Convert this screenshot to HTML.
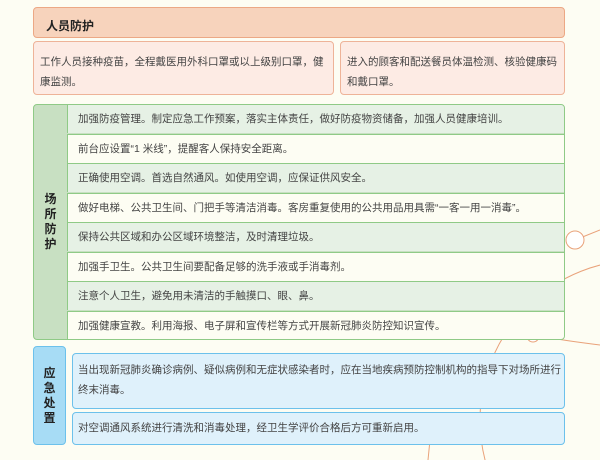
<!DOCTYPE html>
<html><head><meta charset="utf-8"><style>
*{margin:0;padding:0;box-sizing:border-box}
body{width:600px;height:460px;background:#fdfdf3;font-family:"Liberation Sans","Noto Sans CJK SC",sans-serif;font-size:10.5px;color:#444;position:relative;overflow:hidden}
.a{position:absolute}
.hd{left:33px;top:7px;width:532px;height:31px;background:#f7d3bc;border:1px solid #eca885;border-radius:4px;font-weight:bold;font-size:12px;color:#222;padding:9px 0 0 12px}
.pb{top:41px;height:54px;background:#fdebe4;border:1px solid #eeb398;border-radius:4px;padding:10px 5px 0 6px;line-height:20px}
.gr{left:33px;top:104px;width:532px;height:236px;border:1px solid #8fca86;border-radius:4px;background:#c8e0c2;overflow:hidden}
.gl{position:absolute;left:0;top:0;width:33px;height:100%;font-weight:bold;font-size:12px;color:#222;display:flex;align-items:center;justify-content:center;line-height:15px;text-align:center}
.row{position:absolute;left:33px;right:0;height:29.4px;border-left:1px solid #8fca86;border-top:1px solid #8fca86;padding:0 0 0 10px;line-height:28px}
.o{background:#e6f1e5}.e{background:#fdfdf3}
.bl{left:33px;top:346px;width:33px;height:99px;background:#a7dcf5;border:1px solid #6cc1eb;border-radius:4px;font-weight:bold;font-size:12px;color:#222;display:flex;align-items:center;justify-content:center;text-align:center;line-height:15px}
.bb{left:72px;width:493px;background:#dff1fb;border:1px solid #6cc1eb;border-radius:4px;padding:0 3px 0 5px;overflow:hidden}
</style></head><body>
<svg class="a" style="left:0;top:0" width="600" height="460">
<g fill="none" stroke="#e9a27a" stroke-width="1">
<circle cx="640" cy="420" r="160"/>
<path d="M575 240 L600 230 M560 270 Q540 300 533 336 M540 336 Q560 340 600 345 M428 460 L430 440"/>
</g>
<circle cx="575" cy="240" r="9" fill="#fff" stroke="#e9a27a"/>
<circle cx="533" cy="336" r="6" fill="#fff" stroke="#e9a27a"/>
</svg>
<div class="a hd">人员防护</div>
<div class="a pb" style="left:33px;width:301px">工作人员接种疫苗，全程戴医用外科口罩或以上级别口罩，健康监测。</div>
<div class="a pb" style="left:340px;width:225px">进入的顾客和配送餐员体温检测、核验健康码和戴口罩。</div>
<div class="a gr">
<div class="gl">场<br>所<br>防<br>护</div>
<div class="row o" style="top:-1px">加强防疫管理。制定应急工作预案，落实主体责任，做好防疫物资储备，加强人员健康培训。</div>
<div class="row e" style="top:28.5px">前台应设置“1 米线”，提醒客人保持安全距离。</div>
<div class="row o" style="top:58px">正确使用空调。首选自然通风。如使用空调，应保证供风安全。</div>
<div class="row e" style="top:87.5px">做好电梯、公共卫生间、门把手等清洁消毒。客房重复使用的公共用品用具需“一客一用一消毒”。</div>
<div class="row o" style="top:117px">保持公共区域和办公区域环境整洁，及时清理垃圾。</div>
<div class="row e" style="top:146.5px">加强手卫生。公共卫生间要配备足够的洗手液或手消毒剂。</div>
<div class="row o" style="top:176px">注意个人卫生，避免用未清洁的手触摸口、眼、鼻。</div>
<div class="row e" style="top:205.5px">加强健康宣教。利用海报、电子屏和宣传栏等方式开展新冠肺炎防控知识宣传。</div>
</div>
<div class="a bl">应<br>急<br>处<br>置</div>
<div class="a bb" style="top:353px;height:56px;padding-top:6px;line-height:20px;white-space:nowrap">当出现新冠肺炎确诊病例、疑似病例和无症状感染者时，应在当地疾病预防控制机构的指导下对场所进行<br>终末消毒。</div>
<div class="a bb" style="top:412px;height:33px;line-height:31px">对空调通风系统进行清洗和消毒处理，经卫生学评价合格后方可重新启用。</div>
</body></html>
